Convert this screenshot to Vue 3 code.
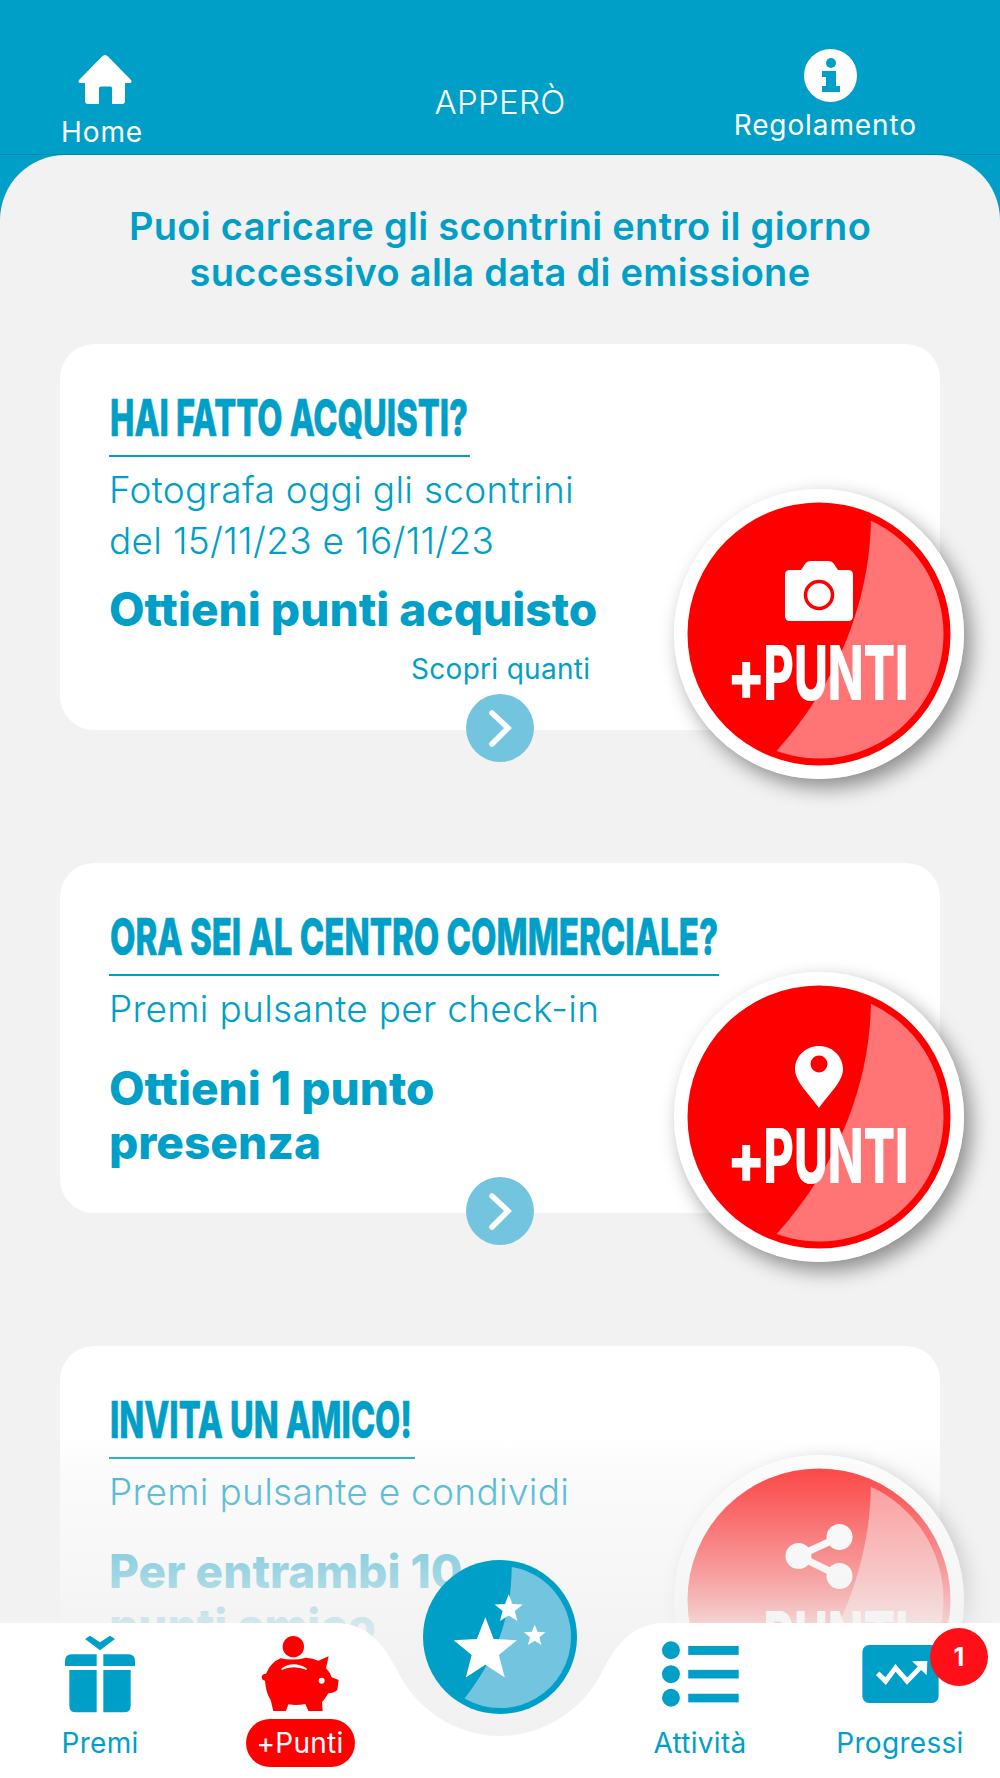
<script setup>
const cards = [
  {
    key: 'buy', title: 'HAI FATTO ACQUISTI?', titleWidth: 361, titleText: 358, icon: 'camera', tight: true, link: 'Scopri quanti',
    desc: ['Fotografa oggi gli scontrini', 'del 15/11/23 e 16/11/23'], strong: ['Ottieni punti acquisto'],
  },
  {
    key: 'here', title: 'ORA SEI AL CENTRO COMMERCIALE?', titleWidth: 610, titleText: 608, icon: 'pin',
    desc: ['Premi pulsante per check-in'], strong: ['Ottieni 1 punto', 'presenza'],
  },
  {
    key: 'friend', title: 'INVITA UN AMICO!', titleWidth: 306, titleText: 302, icon: 'share',
    desc: ['Premi pulsante e condividi'], strong: ['Per entrambi 10', 'punti amico'],
  },
]

const squeeze = 0.585

function star(cx, cy, r, inner = 0.43) {
  const pts = []
  for (let i = 0; i < 10; i++) {
    const rad = i % 2 ? r * inner : r
    const a = -Math.PI / 2 + (i * Math.PI) / 5
    pts.push(`${(cx + rad * Math.cos(a)).toFixed(1)},${(cy + rad * Math.sin(a)).toFixed(1)}`)
  }
  return pts.join(' ')
}
</script>

<template>
  <div class="screen">
    <header class="topbar">
      <div class="top-home">
        <svg class="home-icon" viewBox="0 0 54 49" width="54" height="49">
          <path fill="#fff" fill-rule="evenodd" d="M27 0 Q28.5 0 30 1.5 L53 25 Q54.5 27.5 52 28 H47 V46 Q47 49 44 49 H34 V33 Q34 31.5 32.5 31.5 H23 Q21 31.5 21 33 V49 H10 Q7 49 7 46 V28 H2 Q-.5 27.5 1 25 L24 1.5 Q25.5 0 27 0Z" />
        </svg>
        <span class="top-label">Home</span>
      </div>
      <div class="brand">APPERÒ</div>
      <div class="top-rules">
        <svg class="info-icon" viewBox="0 0 53 53" width="53" height="53">
          <circle cx="26.5" cy="26.5" r="26.5" fill="#fff" />
          <circle cx="27" cy="14" r="5" fill="#009fc7" />
          <path fill="#009fc7" d="M18 22 H32 V37 H36 V43 H18 V37 H22 V28 H18Z" />
        </svg>
        <span class="top-label">Regolamento</span>
      </div>
    </header>

    <main class="panel">
      <h1 class="notice">Puoi caricare gli scontrini entro il giorno<br />successivo alla data di emissione</h1>

      <section v-for="card in cards" :key="card.key" class="card" :class="{ 'card-tight': card.tight }">
        <svg
          class="card-title"
          :width="card.titleWidth"
          height="65"
          :viewBox="`0 0 ${card.titleWidth / squeeze} 65`"
          preserveAspectRatio="none"
        >
          <text x="1.7" y="46" :textLength="card.titleText / squeeze" lengthAdjust="spacingAndGlyphs">{{ card.title }}</text>
        </svg>
        <p class="desc"><template v-for="line in card.desc" :key="line">{{ line }}<br /></template></p>
        <p class="strong"><template v-for="line in card.strong" :key="line">{{ line }}<br /></template></p>
        <p v-if="card.link" class="link">{{ card.link }}</p>

        <span class="arrow">
          <svg viewBox="0 0 68 68" width="68" height="68">
            <path d="M26 19 L42 34 L26 50" fill="none" stroke="#fff" stroke-width="5.5" stroke-linecap="round" stroke-linejoin="miter" />
          </svg>
        </span>

        <div class="badge">
          <svg viewBox="0 0 290 290" width="290" height="290">
            <circle cx="145" cy="145" r="145" fill="#fff" />
            <circle cx="145" cy="145" r="131.5" fill="#ff0000" />
            <path fill="#ff7474" d="M196.9 31.8 C196 100 172 185 102.6 262.1 A124.5 124.5 0 0 0 269.5 145 A124.5 124.5 0 0 0 196.9 31.8Z" />
            <path v-if="card.icon === 'camera'" fill="#fff" d="M116 81 H127 L131 75 Q133 72 137 72 H154 Q158 72 160 75 L164 81 H174 Q179 81 179 86 V127 Q179 132 174 132 H116 Q111 132 111 127 V86 Q111 81 116 81Z" />
            <circle v-if="card.icon === 'camera'" cx="145" cy="106" r="13.5" fill="#fff" stroke="#ff0000" stroke-width="3.5" />
            <path v-if="card.icon === 'pin'" fill="#fff" fill-rule="evenodd" d="M145 74 C158 74 169 84 169 97 C169 110 153 124 145 136 C137 124 121 110 121 97 C121 84 132 74 145 74Z M145 83.5 A8.5 8.5 0 1 0 145 100.5 A8.5 8.5 0 1 0 145 83.5Z" />
            <g v-if="card.icon === 'share'" fill="#fff">
              <path d="M124.5 101 L165.5 82 M124.5 101 L165.5 121" stroke="#fff" stroke-width="7" />
              <circle cx="124.5" cy="101" r="13" />
              <circle cx="165.5" cy="82" r="13" />
              <circle cx="165.5" cy="121" r="13" />
            </g>
            <g transform="translate(53 211) scale(0.8 1)">
              <text class="badge-plus" x="0" y="0">+</text>
            </g>
            <g transform="translate(55.5 211) scale(0.63 1)">
              <text class="badge-text" x="54" y="0" textLength="230" lengthAdjust="spacingAndGlyphs">PUNTI</text>
            </g>
          </svg>
        </div>
      </section>
    </main>

    <div class="fade"></div>

    <nav class="tabbar">
      <svg class="tab-bg" viewBox="0 0 1000 155" width="1000" height="155">
        <path fill="#fff" d="M0 0 H335 C370 0 385 25 397 47 C415 85 455 113 500 113 C545 113 585 85 603 47 C615 25 630 0 665 0 H1000 V155 H0Z" />
      </svg>

      <svg class="center-btn" viewBox="13 10 154 154" width="154" height="154">
        <circle cx="90" cy="87" r="77" fill="#009fc7" />
        <path fill="#73c4de" d="M101.75 17 C101 60 92 100 54.55 148.6 A71 71 0 0 0 161 87 A71 71 0 0 0 101.75 17Z" />
        <polygon fill="#fff" :points="star(98.7, 59, 14.8)" />
        <polygon fill="#fff" :points="star(124.7, 85.8, 11.4)" />
        <polygon fill="#fff" :points="star(75.3, 100.5, 33.2)" />
      </svg>

      <div class="tab">
        <svg class="icon-gift" viewBox="195 226 210 234" width="70" height="78">
          <path fill="#009fc7" d="M255 238 L270 228 L300 248 L330 228 L345 238 L300 272Z" />
          <path fill="#009fc7" d="M215 284 H290 V319 H195 V304 Q195 284 215 284Z M310 284 H385 Q405 284 405 304 V319 H310Z" />
          <path fill="#009fc7" d="M208 331 H290 V458 H228 Q208 458 208 438Z M310 331 H392 V438 Q392 458 372 458 H310Z" />
        </svg>
        <span class="tab-label">Premi</span>
      </div>

      <div class="tab">
        <svg class="icon-pig" viewBox="0 0 300 285" width="100" height="95">
          <circle cx="130" cy="65" r="32" fill="#ff0000" />
          <path fill="#ff0000" fill-rule="evenodd" d="M35 155 Q37 146 48 146 Q62 112 92 100 Q130 108 168 98 Q190 100 205 107 L236 94 L228 130 Q240 142 245 157 L266 165 L262 195 Q250 205 235 205 Q225 222 216 232 L218 258 H175 L166 237 Q140 242 115 238 L108 258 H70 L62 225 Q48 205 45 167 Q35 165 35 155Z M95 130 Q130 106 170 130 L170 135 Q130 118 95 135Z M215 158 A9 9 0 1 0 215 176 A9 9 0 1 0 215 158Z" />
        </svg>
        <span class="tab-pill">+Punti</span>
      </div>

      <div class="tab"></div>

      <div class="tab">
        <svg class="icon-list" viewBox="484 243 232 197" width="77" height="66">
          <g fill="#009fc7">
            <circle cx="511" cy="270" r="27" />
            <circle cx="511" cy="342" r="27" />
            <circle cx="511" cy="413" r="27" />
            <rect x="563" y="257" width="152" height="27" />
            <rect x="563" y="329" width="152" height="26" />
            <rect x="563" y="401" width="152" height="26" />
          </g>
        </svg>
        <span class="tab-label">Attività</span>
      </div>

      <div class="tab">
        <svg class="icon-chart" viewBox="1085 255 230 175" width="77" height="58">
          <rect x="1085" y="255" width="230" height="175" rx="20" fill="#009fc7" />
          <path fill="none" stroke="#fff" stroke-width="15" d="M1131 340 L1155 364 L1185 324 L1220 364 L1270 312" />
          <path fill="#fff" d="M1235 304 L1281 303 L1279 346Z" />
        </svg>
        <span class="tab-label">Progressi</span>
        <span class="count">1</span>
      </div>
    </nav>
  </div>
</template>

<style scoped>
.screen {
  position: relative;
  width: 1000px;
  height: 1778px;
  overflow: hidden;
  background: #009fc7;
  font-family: Inter, "Noto Sans", sans-serif;
  color: #009fc7;
}

.topbar {
  box-sizing: border-box;
  height: 155px;
  display: grid;
  grid-template-columns: 1fr auto 1fr;
  align-items: start;
  color: #fff;
  border-bottom: 1px solid rgba(0, 0, 0, 0.14);
}
.top-home {
  justify-self: start;
  display: flex;
  flex-direction: column;
  align-items: center;
  gap: 12px;
  margin: 55px 0 0 61px;
}
.home-icon {
  margin-left: 5px;
}
.top-rules {
  justify-self: end;
  display: flex;
  flex-direction: column;
  align-items: center;
  gap: 7px;
  margin: 49px 83px 0 0;
}
.info-icon {
  margin-left: 10px;
}
.top-label {
  font-size: 28px;
  line-height: 32px;
  letter-spacing: 0.9px;
}
.brand {
  margin-top: 83px;
  font-size: 33px;
  line-height: 38px;
  font-weight: 300;
  letter-spacing: 0.3px;
}

.panel {
  height: 1623px;
  padding: 48px 60px 0;
  box-sizing: border-box;
  background: #f2f2f2;
  border-radius: 65px 65px 0 0;
}
.notice {
  margin: 0 0 49px;
  font-size: 38px;
  line-height: 46px;
  font-weight: 600;
  letter-spacing: 0.3px;
  text-align: center;
  white-space: nowrap;
}

.card {
  position: relative;
  padding: 46px 0 44px 49px;
  margin-bottom: 133px;
  background: #fff;
  border-radius: 34px;
}
.card-title {
  display: block;
  overflow: visible;
  border-bottom: 2px solid #009fc7;
}
.card-title text {
  font-family: Inter, sans-serif;
  font-size: 51px;
  font-weight: 800;
  fill: #009fc7;
  stroke: #009fc7;
  stroke-width: 0.6px;
}
.desc {
  margin: 7px 0 0;
  font-size: 37px;
  line-height: 51px;
  font-weight: 300;
  letter-spacing: 0.3px;
}
.strong {
  margin: 27px 0 0;
  font-size: 46px;
  line-height: 54px;
  font-weight: 800;
}
.card-tight .strong {
  margin-top: 16px;
}
.link {
  margin: 17px 0 0 302px;
  font-size: 28px;
  line-height: 33px;
  letter-spacing: 0.3px;
}
.arrow {
  position: absolute;
  left: 406px;
  bottom: -32px;
  width: 68px;
  height: 68px;
  border-radius: 50%;
  background: #73c4de;
}
.arrow svg {
  display: block;
}
.badge {
  position: absolute;
  top: 109px;
  right: -24px;
  width: 290px;
  height: 290px;
  border-radius: 50%;
  box-shadow: 7px 9px 20px rgba(0, 0, 0, 0.42);
}
.card-tight .badge {
  top: 145px;
}
.badge svg {
  display: block;
}
.badge-text,
.badge-plus {
  font-family: Inter, sans-serif;
  font-weight: 800;
  fill: #fff;
}
.badge-text {
  font-size: 76px;
}
.badge-plus {
  font-size: 70px;
}

.fade {
  position: absolute;
  left: 0;
  right: 0;
  top: 1440px;
  height: 225px;
  background: linear-gradient(
    to bottom,
    rgba(242, 242, 242, 0) 0%,
    rgba(242, 242, 242, 0.3) 13%,
    rgba(242, 242, 242, 0.4) 27%,
    rgba(242, 242, 242, 0.66) 60%,
    rgba(242, 242, 242, 0.85) 80%,
    #f2f2f2 100%
  );
  pointer-events: none;
}
.fade::after {
  content: "";
  position: absolute;
  left: 0;
  right: 0;
  top: 100%;
  height: 113px;
  background: #f2f2f2;
}

.tabbar {
  position: absolute;
  left: 0;
  right: 0;
  bottom: 0;
  height: 155px;
  box-sizing: border-box;
  padding-bottom: 19px;
  display: grid;
  grid-template-columns: repeat(5, 200px);
}
.tab-bg {
  position: absolute;
  left: 0;
  top: 0;
}
.center-btn {
  position: absolute;
  left: 423px;
  top: -63px;
}
.tab {
  position: relative;
  display: flex;
  flex-direction: column;
  align-items: center;
  justify-content: flex-end;
}
.tab svg {
  display: block;
}
.tab-label {
  font-size: 28px;
  line-height: 32px;
  letter-spacing: 0.3px;
}
.tab-pill {
  width: 109px;
  height: 48px;
  margin-bottom: -8px;
  border-radius: 24px;
  background: #ff0000;
  color: #fff;
  font-size: 28px;
  line-height: 48px;
  letter-spacing: 0.3px;
  text-align: center;
}
.icon-gift { margin-bottom: 14px; }
.icon-pig { margin-bottom: -1px; }
.icon-list { margin-bottom: 20px; }
.icon-chart { margin-bottom: 24px; }
.count {
  position: absolute;
  left: 130px;
  top: 5px;
  width: 58px;
  height: 58px;
  border-radius: 50%;
  background: #ff0f18;
  color: #fff;
  font-size: 25px;
  font-weight: 700;
  line-height: 58px;
  text-align: center;
}
</style>
